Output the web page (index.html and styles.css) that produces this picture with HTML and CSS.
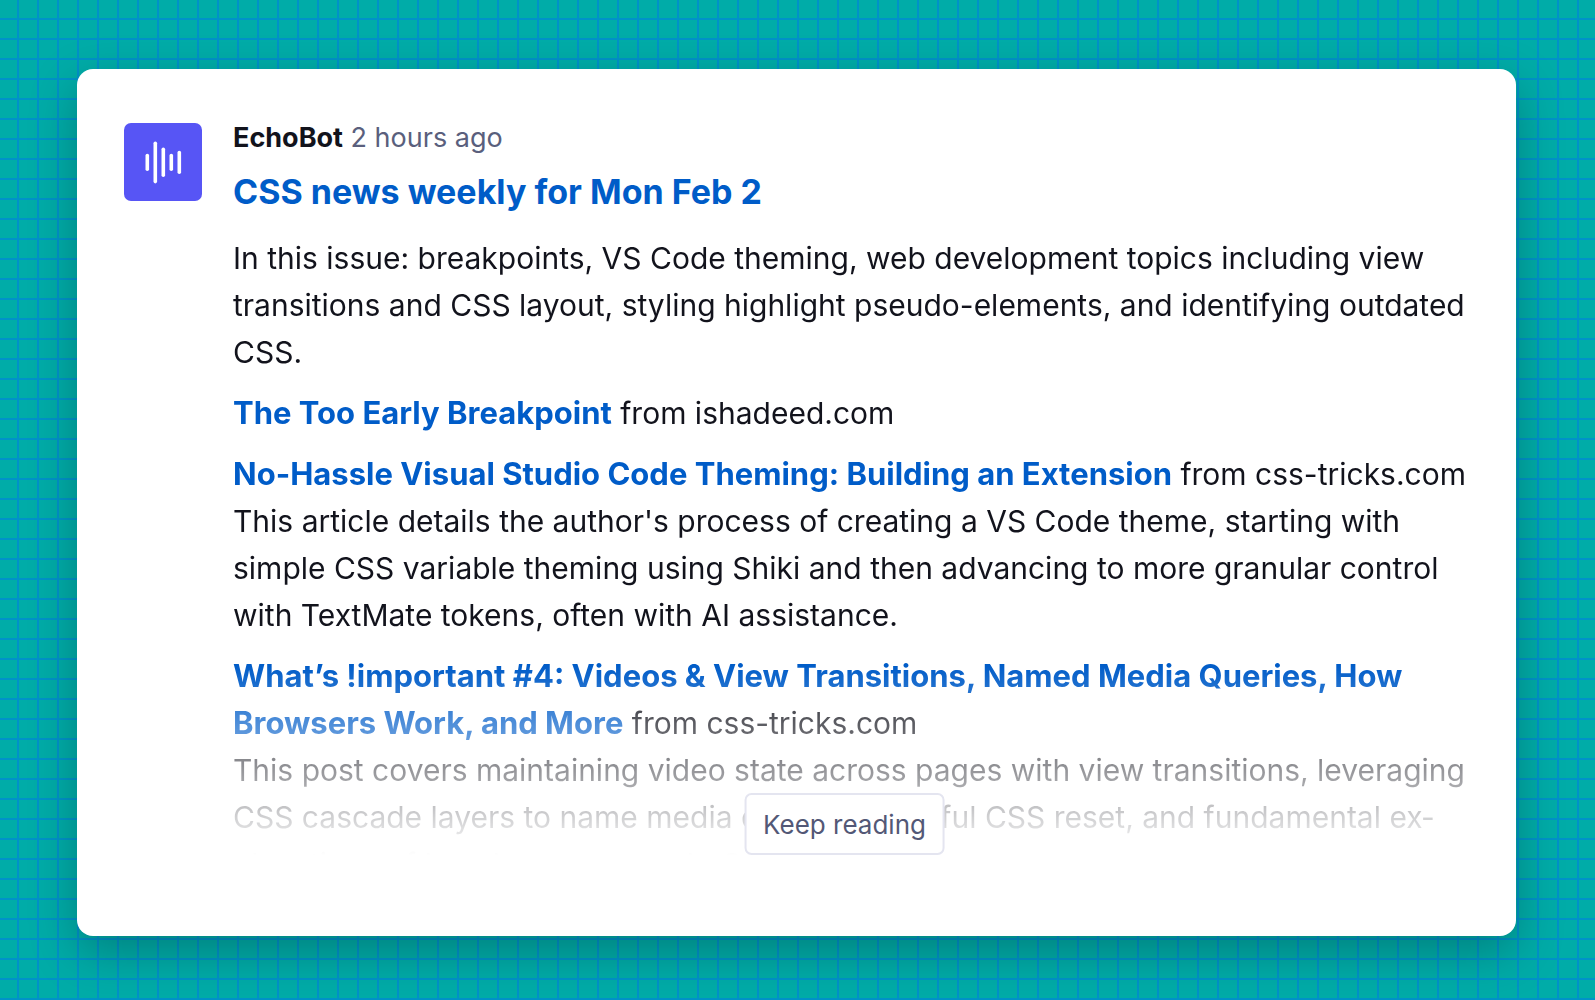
FILE: index.html
```html
<!DOCTYPE html>
<html lang="en">
  <head>
    <meta charset="UTF-8" />
    <meta name="viewport" content="width=device-width, initial-scale=1" />
    <title>CSS news weekly for Mon Feb 2</title>
    <link rel="stylesheet" href="styles.css">
  </head>

  <body>
    <article class="card">
      <svg class="avatar" viewBox="0 0 78 78" role="img" aria-label="EchoBot">
        <rect width="78" height="78" rx="7" fill="#5755f5" />
        <g stroke="#fff" stroke-width="3.6" stroke-linecap="round">
          <path d="M23.3 32.5v13.8" />
          <path d="M31.3 20.2v38.4" />
          <path d="M39.3 26.2v26" />
          <path d="M47.3 32.5v13.8" />
          <path d="M55.3 29.5v19.8" />
        </g>
      </svg>

      <div class="post">
        <div class="byline">
          <strong class="author">EchoBot</strong>
          <time>2 hours ago</time>
        </div>
        <h1 class="title"><a href="#">CSS news weekly for Mon Feb 2</a></h1>

        <div class="excerpt">
          <p>
            In this issue: breakpoints, VS Code theming, web development topics
            including view transitions and CSS layout, styling highlight
            pseudo-elements, and identifying outdated CSS.
          </p>
          <p><a href="#">The Too Early Breakpoint</a> from ishadeed.com</p>
          <p>
            <a href="#">No-Hassle Visual Studio Code Theming: Building an Extension</a>
            from css-tricks.com<br />
            This article details the author's process of creating a VS Code
            theme, starting with simple CSS variable theming using Shiki and
            then advancing to more granular control with TextMate tokens, often
            with AI assistance.
          </p>
          <p>
            <a href="#">What’s !important #4: Videos &amp; View Transitions, Named Media Queries, How Browsers Work, and More</a>
            from css-tricks.com<br />
            This post covers maintaining video state across pages with view
            transitions, leveraging CSS cascade layers to name media queries, a
            useful CSS reset, and fundamental ex&shy;planations of how browsers
            work. CSS
          </p>
        </div>
        <button type="button" class="more">Keep reading</button>
      </div>
    </article>
  </body>
</html>
```
FILE: styles.css
```css
* {
  box-sizing: border-box;
}
body {
  margin: 0;
  min-height: 100vh;
  padding: 69px 79px 64px 77px;
  font-family: Inter, "Liberation Sans", sans-serif;
  color: #12131c;
  background-color: #00aca8;
  background-image:
    linear-gradient(#0092c8 2px, transparent 2px),
    linear-gradient(90deg, #0092c8 2px, transparent 2px);
  background-size: 20px 20px;
  background-position: 17px 18px;
}
a {
  color: #005cc8;
  font-weight: 700;
  text-decoration: none;
}
.card {
  display: flex;
  gap: 31px;
  padding: 54px 60px 81px 47px;
  background: white;
  border-radius: 16px;
  box-shadow: 0 16px 48px rgba(0, 0, 0, 0.25);
}
.avatar {
  flex: none;
  width: 78px;
  height: 78px;
}
.post {
  position: relative;
  flex: 1;
  min-width: 0;
}
.byline {
  font-size: 27px;
  line-height: 30px;
  color: #5a5f7d;
}
.author {
  color: #12131c;
}
.title {
  margin: 14px 0 18px;
  font-size: 34px;
  line-height: 50px;
}
.excerpt {
  height: 620px;
  margin-right: -20px;
  overflow: hidden;
  font-size: 30px;
  line-height: 47px;
  -webkit-mask-image: linear-gradient(to top, transparent, black 190px);
  mask-image: linear-gradient(to top, transparent, black 190px);
}
.excerpt p {
  margin: 0 0 14px;
}
.excerpt a {
  font-size: 31px;
  line-height: 30px;
}
/* sits over the faded end of the text */
.more {
  position: absolute;
  bottom: 0;
  left: 50%;
  transform: translateX(-50%);
  height: 62px;
  padding: 0 17px;
  font: inherit;
  font-size: 26px;
  color: #535876;
  background: white;
  border: 2px solid #e4e5f0;
  border-radius: 7px;
  white-space: nowrap;
}
```
